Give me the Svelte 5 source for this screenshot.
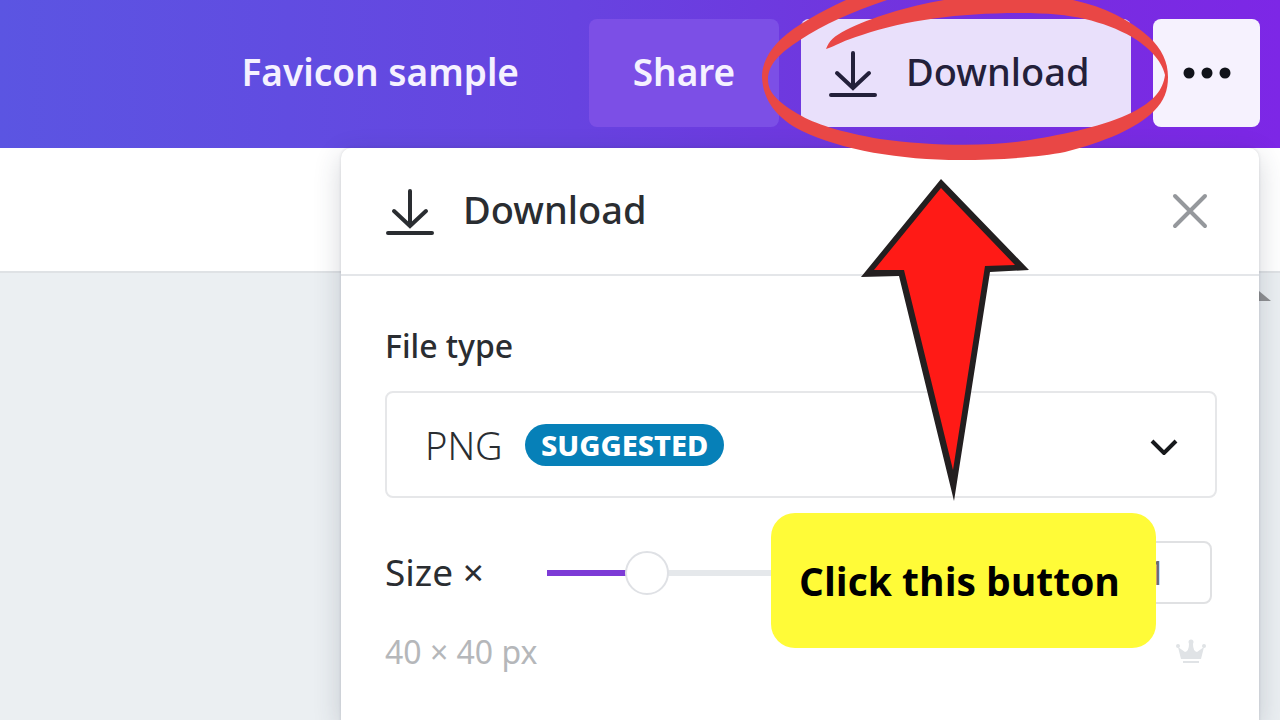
<script>
  let scale = $state(1);
  const min = 0.5;
  const max = 3.6;
  let ratio = $derived((scale - min) / (max - min));
</script>

{#snippet downloadIcon()}
  <svg class="download-icon" viewBox="0 0 50 50" width="50" height="50" aria-hidden="true">
    <path d="M25 5v34M9 25l16 15 16-15M3 47h44" />
  </svg>
{/snippet}

<div class="page">
  <header>
    <span class="title">Favicon sample</span>
    <button class="share">Share</button>
    <button class="download">{@render downloadIcon()}<span>Download</span></button>
    <button class="more" aria-label="More options">
      <svg viewBox="0 0 50 12" width="50" height="12" aria-hidden="true">
        <circle cx="7" cy="6" r="5.5" /><circle cx="25" cy="6" r="5.5" /><circle cx="43" cy="6" r="5.5" />
      </svg>
    </button>
  </header>

  <main>
    <div class="backdrop">
      <div class="toolbar"></div>
      <div class="canvas">
        <svg viewBox="0 0 24 10" width="24" height="10" aria-hidden="true"><path d="M0 10 12 0 24 10z" /></svg>
      </div>
    </div>

    <section class="panel">
      <div class="panel-head">
        {@render downloadIcon()}
        <h2>Download</h2>
        <button class="close" aria-label="Close">
          <svg viewBox="0 0 38 38" width="38" height="38" aria-hidden="true"><path d="M4 4l30 30M34 4L4 34" /></svg>
        </button>
      </div>
      <div class="panel-body">
        <label class="type-label" for="type">File type</label>
        <div class="select">
          <select id="type"><option>PNG</option></select>
          <span class="badge">SUGGESTED</span>
          <svg viewBox="0 0 32 20" width="32" height="20" aria-hidden="true"><path d="M4 6l12 12L28 6" /></svg>
        </div>
        <div class="size">
          <label for="size">Size ×</label>
          <input id="size" type="range" {min} {max} step="0.1" bind:value={scale} style="--ratio: {ratio}" />
          <input class="number" type="text" aria-label="Size multiplier" bind:value={scale} />
        </div>
        <div class="hint">
          <span>40 × 40 px</span>
          <svg viewBox="0 0 32 28" width="32" height="28" aria-hidden="true">
            <path d="M6 21 3 9l7 5q4-1 4-8h4q0 7 4 8l7-5-3 12zM8 23h16v2H8z" />
            <circle cx="3" cy="8" r="2" /><circle cx="16" cy="4" r="2.5" /><circle cx="29" cy="8" r="2" />
          </svg>
        </div>
      </div>
    </section>
  </main>

  <svg class="ring" viewBox="760 0 410 162" width="410" height="162" aria-hidden="true">
    <path d="M846 0C820 12 796 25 780 40C768 52 762 64 762 77C763 100 776 118 802 131C842 150 900 160 960 160C1000 160 1040 157 1065 152C1105 142 1137 128 1154 111C1164 101 1168 91 1168 77C1168 62 1162 49 1149 37C1130 20 1105 7 1073 0V-10H944V0C908 6 870 18 846 30C834 36 829 41 826 49C836 46 844 40 862 35C906 20 960 13 1020 13C1048 13 1068 15 1085 19C1102 23 1118 29 1132 37C1147 46 1162 60 1165 75C1163 90 1154 101 1133 112C1105 126 1065 134 1030 140C990 147 930 146 880 139C840 132 815 124 798 114C776 101 768 91 768 80C768 64 780 53 800 40C824 24 852 12 887 0V-10H846Z" />
  </svg>

  <svg class="arrow" viewBox="860 178 170 324" width="170" height="324" aria-hidden="true">
    <path fill="#231f20" d="M941 179 1029 270 990 272 954 501 899 276 861 277Z" />
    <path fill="#ff1a16" d="M941 188 1015 265 985 266 953 470 904 270 874 270Z" />
  </svg>

  <div class="callout">Click this button</div>
</div>

<style>
  :global(body) {
    margin: 0;
  }
  .page {
    position: relative;
    display: flex;
    flex-direction: column;
    min-height: 100vh;
    overflow: hidden;
    font-family: "Noto Sans", "Open Sans", sans-serif;
    color: #2a2d31;
  }
  .page * {
    box-sizing: border-box;
  }
  button,
  input,
  select {
    margin: 0;
    border: 0;
    font: inherit;
    color: inherit;
  }
  header {
    display: flex;
    align-items: center;
    justify-content: flex-end;
    gap: 22px;
    padding: 19px 20px 21px;
    background: linear-gradient(90deg, #5b55e2 0%, #6743e0 45%, #7430de 75%, #7d27e6 100%);
    font-size: 37px;
    font-weight: 600;
  }
  header button {
    height: 108px;
    border-radius: 8px;
  }
  .title,
  .share,
  .download span,
  h2 {
    padding-bottom: 4px;
  }
  .title {
    margin-right: 48px;
    color: #f5f1ff;
  }
  .share {
    width: 190px;
    background: #7c4fe6;
    color: #f5f1ff;
  }
  .download {
    display: flex;
    align-items: center;
    gap: 28px;
    width: 330px;
    padding: 0 27px;
    background: #e9e0fb;
    color: #23203a;
    font-size: 38px;
    font-weight: 500;
  }
  .more {
    width: 107px;
    padding: 0;
    background: #f6f2fe;
  }
  .more svg {
    display: block;
    margin: 0 auto;
    fill: #11131a;
  }
  .download-icon {
    flex: none;
    fill: none;
    stroke: currentColor;
    stroke-width: 4;
    stroke-linecap: round;
  }
  main {
    flex: 1;
    display: grid;
  }
  .backdrop,
  .panel {
    grid-area: 1 / 1;
  }
  .backdrop {
    display: flex;
    flex-direction: column;
  }
  .toolbar {
    height: 125px;
    border-bottom: 2px solid #dfe2e5;
    background: #fff;
  }
  .canvas {
    flex: 1;
    display: flex;
    justify-content: flex-end;
    padding: 18px 9px 0 0;
    background: #ebeff2;
  }
  .canvas svg {
    fill: #8f9092;
  }
  .panel {
    margin: 0 21px 0 341px;
    border-radius: 10px 10px 0 0;
    background: #fff;
    box-shadow: 0 8px 28px rgba(40, 50, 70, 0.2), 0 0 3px rgba(40, 50, 70, 0.15);
  }
  .panel-head {
    display: flex;
    align-items: center;
    gap: 28px;
    height: 128px;
    padding: 0 44px;
    border-bottom: 2px solid #e4e6e9;
  }
  h2 {
    flex: 1;
    margin: 0;
    font-size: 38px;
    font-weight: 500;
  }
  .close {
    padding: 0 6px 0 0;
    background: none;
  }
  .close svg {
    display: block;
    fill: none;
    stroke: #95989c;
    stroke-width: 4;
    stroke-linecap: round;
  }
  .panel-body {
    padding: 48px 42px 48px 44px;
  }
  .type-label {
    display: block;
    font-size: 32px;
    line-height: 44px;
    font-weight: 500;
  }
  .select {
    display: grid;
    align-items: center;
    margin-top: 23px;
  }
  .select > * {
    grid-area: 1 / 1;
  }
  select {
    width: 100%;
    height: 107px;
    padding: 0 38px;
    appearance: none;
    border: 2px solid #e6e7e9;
    border-radius: 8px;
    background: #fff;
    font-size: 38px;
    font-weight: 300;
  }
  .badge {
    justify-self: start;
    margin-left: 140px;
    padding: 0 16px;
    border-radius: 21px;
    background: #0680b8;
    color: #fff;
    font-size: 29px;
    line-height: 42px;
    font-weight: 800;
    pointer-events: none;
  }
  .select svg {
    justify-self: end;
    margin-right: 37px;
    fill: none;
    stroke: #17191c;
    stroke-width: 4;
    pointer-events: none;
  }
  .size {
    display: flex;
    align-items: center;
    gap: 22px;
    margin: 43px 5px 0 0;
    font-size: 37px;
  }
  .size label {
    width: 140px;
    padding-bottom: 2px;
  }
  input[type="range"] {
    flex: 1;
    min-width: 0;
    height: 44px;
    appearance: none;
    border-radius: 3px;
    background: linear-gradient(90deg, #7d3bd6 calc(22px + (100% - 44px) * var(--ratio)), #e5e8eb 0) center / 100% 6px no-repeat;
  }
  input[type="range"]::-webkit-slider-thumb {
    width: 44px;
    height: 44px;
    appearance: none;
    border: 2px solid #dfe1e5;
    border-radius: 50%;
    background: #fff;
  }
  .number {
    width: 116px;
    height: 63px;
    padding: 0 0 0 6px;
    border: 2px solid #e0e1e3;
    border-radius: 8px;
    font-size: 32px;
    text-align: center;
    color: #6b6d70;
  }
  .hint {
    display: flex;
    align-items: center;
    justify-content: space-between;
    margin: 26px 10px 0 0;
    color: #b5b7ba;
    font-size: 32px;
    line-height: 44px;
  }
  .hint svg {
    fill: #e0e3e6;
  }
  .ring,
  .arrow,
  .callout {
    position: absolute;
    pointer-events: none;
  }
  .ring {
    top: 0;
    right: 110px;
    fill: #e94745;
  }
  .arrow {
    top: 178px;
    right: 250px;
  }
  .callout {
    top: 513px;
    right: 124px;
    padding: 0 36px 0 28px;
    border-radius: 24px;
    background: #fffb38;
    color: #000;
    font-family: "Open Sans", "Noto Sans", sans-serif;
    font-size: 39px;
    line-height: 135px;
    font-weight: 700;
    white-space: nowrap;
  }
</style>
